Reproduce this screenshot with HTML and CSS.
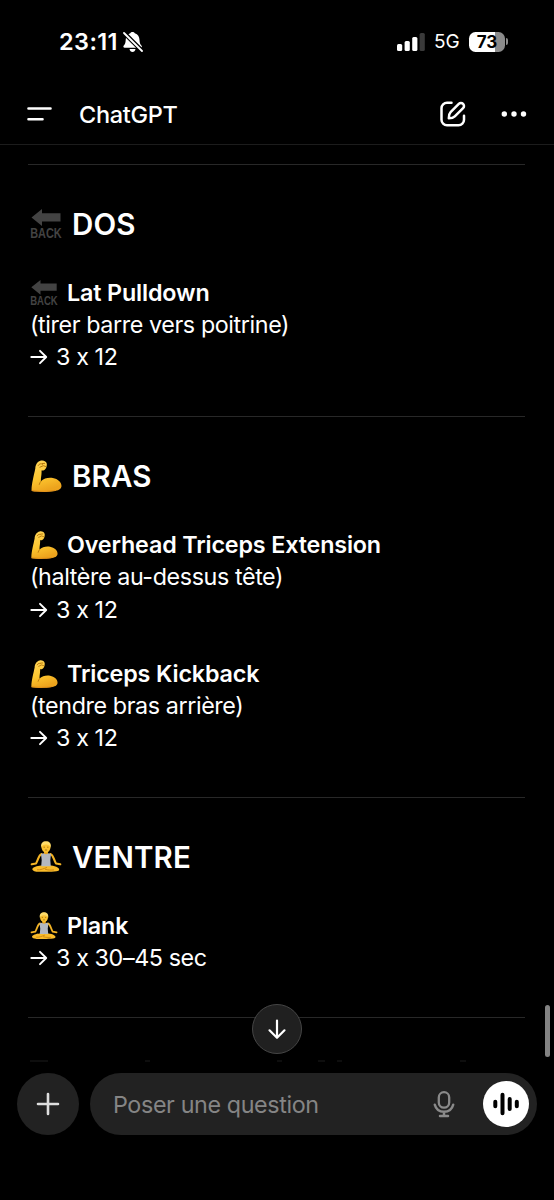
FILE: index.html
```html
<!DOCTYPE html>
<html lang="fr">
<head>
    <meta charset="UTF-8">
    <meta name="viewport" content="width=device-width, initial-scale=1.0">
    <title>ChatGPT</title>
    <link rel="stylesheet" href="styles.css">
</head>
<body>
    <!-- Icônes réutilisées dans la conversation -->
    <svg class="sprites" width="0" height="0">
        <defs>
            <linearGradient id="peau" x1="0" y1="0" x2="0.3" y2="1">
                <stop offset="0" stop-color="#ffd65c"/>
                <stop offset="0.6" stop-color="#fdc62f"/>
                <stop offset="1" stop-color="#eda41d"/>
            </linearGradient>
        </defs>
        <symbol id="bras" viewBox="0 0 32 32">
            <path d="M1.6 31C1.200 25 4 15 5.300 8.500 5.400 4.500 7.600 1.300 11 .5c2.700-.5 5.600.8 5.800 3.300.2 2.500-.7 5.100-2.400 6.200-1 .6-2 .6-2.900.5.400 3.700-.8 7.500-.6 10.700 3-2.700 7.500-3.900 12-3.100 5 .9 8.600 4.300 8.600 7.900-.1 3.200-3.400 4.600-7.800 5.200-6.500.9-15.500 1-22.100-.2z" fill="url(#peau)"/>
            <path d="M8.200 5.500c1-2 3.200-2.300 4.300-1.200M9.900 7.200l3.400-1.500 2.400.8M12.300 3.500l2.300-.1M11 21.200c-.9 1-1.400 2-1.700 3.200" fill="none" stroke="#b7780d" stroke-width="1" stroke-linecap="round"/>
            <path d="M2.500 30.600c7 1.200 17.500.8 22.500-.3" fill="none" stroke="#df8d1a" stroke-width="1" stroke-linecap="round"/>
        </symbol>
        <symbol id="yoga" viewBox="0 0 32 32">
            <path d="M11.600 13C8.500 14 8.500 18.500 6 22.500l-4.300.8M20.400 13c3.100 1 3.100 5.500 5.600 9.500l4.300.8" fill="none" stroke="#f3b324" stroke-width="2.100" stroke-linecap="round" stroke-linejoin="round"/>
            <path d="M14 9h4v5h-4z" fill="#e9a51c"/>
            <path d="M11 24.500c-4 .3-8.200 1.600-8.700 3.600.2 2.700 4.500 2.900 9 2.700 5-.1 13.500.5 17.200-1 2.600-2.300-2.500-4.900-7.500-5.300z" fill="#f9bb29"/>
            <path d="M7 28.800c4 .4 7-1.400 10-2.400M15 28.200c3 1 6 1 9 .7" fill="none" stroke="#c98011" stroke-width="0.9"/>
            <path d="M11 13l2.600-.8c1.500 1.500 3.300 1.500 4.800 0L21 13l-.7 6 .5 6.200h-9.600l.5-6.200z" fill="#b4b8c0"/>
            <ellipse cx="16" cy="6.200" rx="4.500" ry="5.300" fill="#fbc12f"/>
            <path d="M11.200 6.500C10.500 2 13 .3 16 .3s5.500 1.700 4.800 6.200C20 4.700 18.500 3.600 16 3.600s-4 1.100-4.800 2.900z" fill="#ffdc6a"/>
            <path d="M13.500 6.200h1.400M17.100 6.200h1.400M14.900 9h2.200" stroke="#8b5a10" stroke-width="0.7"/>
        </symbol>
        <symbol id="fleche" viewBox="0 0 18 16">
            <path d="M1.300 8H16M10 1.800 16.200 8 10 14.200" fill="none" stroke="#fff" stroke-width="1.900" stroke-linecap="round" stroke-linejoin="round"/>
        </symbol>
    </svg>

    <div class="status-bar">
        <div class="status-left">
            <span class="time">23:11</span>
            <svg width="20" height="22" viewBox="0 0 20 22">
                <path d="M9.500 1c1.300 0 2 .6 2.300 1.300 3.200.8 4.600 3.400 4.700 6.700.1 3.200.8 4.300 2.100 5.800.6.800.2 1.900-.8 1.900H1.600c-1.100 0-1.600-1-1-1.900 1.300-1.500 2-2.600 2.100-5.800.1-3.300 1.400-5.900 4.600-6.700C7.500 1.600 8.200 1 9.500 1z" fill="#fff"/>
                <path d="M6.500 18h6c-.3 1.900-1.500 2.900-3 2.900s-2.700-1-3-2.900z" fill="#fff"/>
                <path d="M1 1.800 19 19.800" stroke="#000" stroke-width="4.400"/>
                <path d="M1 2 19 20" stroke="#fff" stroke-width="1.800" stroke-linecap="round"/>
            </svg>
        </div>
        <div class="status-right">
            <svg width="28" height="18" viewBox="0 0 28 18">
                <rect x="0" y="11" width="5.200" height="7" rx="1.500" fill="#fff"/>
                <rect x="7.600" y="8" width="5.200" height="10" rx="1.500" fill="#fff"/>
                <rect x="15.200" y="4" width="5.200" height="14" rx="1.500" fill="#fff"/>
                <rect x="22.600" y="0" width="5.200" height="18" rx="1.500" fill="#3a3a3a"/>
            </svg>
            <span class="network">5G</span>
            <div class="battery"><span>73</span></div>
            <div class="battery-tip"></div>
        </div>
    </div>

    <header class="header">
        <svg class="menu-icon" width="26" height="16" viewBox="0 0 26 16">
            <path d="M1.500 2.500h22M1.500 13.300h14" stroke="#fff" stroke-width="2.600" stroke-linecap="round"/>
        </svg>
        <span class="title">ChatGPT</span>
        <svg class="edit-icon" width="28" height="28" viewBox="0 0 28 28" fill="none" stroke="#fff" stroke-width="2.500" stroke-linecap="round" stroke-linejoin="round">
            <path d="M12.500 2.800H8a5.500 5.500 0 0 0-5.500 5.500v11.500a5.500 5.500 0 0 0 5.500 5.500h11.500a5.500 5.500 0 0 0 5.500-5.500v-4"/>
            <path d="M9.800 18.300c0-3 .4-4.700 1.800-6.100l8.200-8.300a3 3 0 0 1 4.300 4.300l-8.300 8.200c-1.400 1.400-3 1.900-6 1.900z"/>
        </svg>
        <svg class="dots-icon" width="26" height="6" viewBox="0 0 26 6" fill="#fff">
            <circle cx="3.300" cy="3" r="2.700"/>
            <circle cx="13" cy="3" r="2.700"/>
            <circle cx="22.500" cy="3" r="2.700"/>
        </svg>
    </header>

    <main class="chat">
        <section>
            <h2>
                <svg class="emoji" viewBox="0 0 32 32">
                    <path d="M1.500 9.500 12 1v4.200h18.500v8.300H12V18z" fill="#434343"/>
                    <text x="0.2" y="30" textLength="31.500" lengthAdjust="spacingAndGlyphs" class="back-text">BACK</text>
                </svg>
                <span>DOS</span>
            </h2>
            <p>
                <strong>
                    <svg class="emoji" viewBox="0 0 32 32">
                        <path d="M1.500 9.500 12 1v4.200h18.500v8.300H12V18z" fill="#434343"/>
                        <text x="0.2" y="30" textLength="31.500" lengthAdjust="spacingAndGlyphs" class="back-text">BACK</text>
                    </svg>
                    <span>Lat Pulldown</span>
                </strong>
                <span>(tirer barre vers poitrine)</span>
                <span class="reps"><svg class="arrow"><use href="#fleche"/></svg>3 x 12</span>
            </p>
        </section>
        <section>
            <h2><svg class="emoji"><use href="#bras"/></svg><span>BRAS</span></h2>
            <p>
                <strong><svg class="emoji"><use href="#bras"/></svg><span>Overhead Triceps Extension</span></strong>
                <span>(haltère au-dessus tête)</span>
                <span class="reps"><svg class="arrow"><use href="#fleche"/></svg>3 x 12</span>
            </p>
            <p>
                <strong><svg class="emoji"><use href="#bras"/></svg><span>Triceps Kickback</span></strong>
                <span>(tendre bras arrière)</span>
                <span class="reps"><svg class="arrow"><use href="#fleche"/></svg>3 x 12</span>
            </p>
        </section>
        <section>
            <h2><svg class="emoji"><use href="#yoga"/></svg><span>VENTRE</span></h2>
            <p>
                <strong><svg class="emoji"><use href="#yoga"/></svg><span>Plank</span></strong>
                <span class="reps"><svg class="arrow"><use href="#fleche"/></svg>3 x 30–45 sec</span>
            </p>
        </section>
        <div class="end-line">
            <!-- Haut de la ligne suivante, presque masquée par le fondu -->
            <svg width="497" height="2" viewBox="0 0 497 2">
                <path d="M2 1h18M117 1h5M249 1h5M290 1h7M309 1h5M432 1h6" stroke="#0e0e0e" stroke-width="2"/>
            </svg>
        </div>
    </main>

    <button class="scroll-down">
        <svg width="20" height="22" viewBox="0 0 20 22" fill="none" stroke="#fff" stroke-width="2.200" stroke-linecap="round" stroke-linejoin="round">
            <path d="M10 2.500v17M2.500 12.300 10 19.800l7.500-7.500"/>
        </svg>
    </button>
    <div class="scrollbar"></div>

    <footer class="composer">
        <button class="plus">
            <svg width="24" height="24" viewBox="0 0 24 24">
                <path d="M12 2v20M2 12h20" stroke="#dedede" stroke-width="2.600" stroke-linecap="round"/>
            </svg>
        </button>
        <div class="field">
            <span class="placeholder">Poser une question</span>
            <svg class="mic" width="22" height="28" viewBox="0 0 22 28" fill="none" stroke="#8a8a8a" stroke-width="2.300" stroke-linecap="round">
                <rect x="5.800" y="2.200" width="10.400" height="15.500" rx="5.200"/>
                <path d="M1.800 14.700c1.200 4.600 4.700 7 9.200 7s8-2.400 9.200-7M11 21.700v4M7 26h8" stroke-width="2.500"/>
            </svg>
            <button class="voice">
                <svg width="26" height="24" viewBox="0 0 26 24" stroke="#000" stroke-width="4" stroke-linecap="round">
                    <path d="M2.300 9.800v4.400M9.500 2.800v18.500M16.700 7v10M23.800 9.800v4.400"/>
                </svg>
            </button>
        </div>
    </footer>
</body>
</html>
```
FILE: styles.css
```css
* {
    box-sizing: border-box;
}
body {
    margin: 0;
    width: 554px;
    height: 1200px;
    position: relative;
    overflow: hidden;
    display: flex;
    flex-direction: column;
    background-color: #000;
    color: #fff;
    font-family: Inter, "Liberation Sans", sans-serif;
    font-feature-settings: "calt" 0;
}
svg {
    display: block;
    flex: none;
}
button {
    border: none;
    padding: 0;
    display: flex;
    align-items: center;
    justify-content: center;
    border-radius: 50%;
}
.sprites {
    position: absolute;
}
.back-text {
    font-family: "Liberation Sans", sans-serif;
    font-size: 14px;
    font-weight: bold;
    letter-spacing: 0;
    fill: #434343;
}

/* Barre d'état */
.status-bar {
    height: 84px;
    padding: 0 46px 1px 59px;
    display: flex;
    justify-content: space-between;
    align-items: center;
}
.status-left, .status-right {
    display: flex;
    align-items: center;
}
.time {
    font-size: 23.5px;
    font-weight: 600;
    width: 64px;
    white-space: nowrap;
    letter-spacing: 0.4px;
}
.network {
    font-size: 19px;
    width: 35px;
    margin-left: 9px;
    letter-spacing: -0.1px;
}
.battery {
    width: 36px;
    height: 20px;
    border-radius: 6.5px;
    background: linear-gradient(to right, #fff 73%, #8b8b8b 73%);
    color: #000;
    font-size: 17px;
    font-weight: 700;
    line-height: 20px;
    text-align: center;
}
.battery-tip {
    width: 2px;
    height: 7px;
    margin-left: 1px;
    border-radius: 0 3px 3px 0;
    background-color: #8b8b8b;
}

/* En-tête */
.header {
    height: 61px;
    padding: 0 27px 0 27px;
    display: flex;
    align-items: center;
    border-bottom: 1px solid #1c1c1c;
}
.title {
    margin-left: 26px;
    font-size: 23.5px;
    font-weight: 500;
    letter-spacing: -0.3px;
}
.edit-icon {
    margin-left: auto;
}
.dots-icon {
    margin-left: 34px;
}

/* Conversation */
.chat {
    height: 921px;
    padding: 19px 29px 0 28px;
}
section {
    border-top: 1px solid #282828;
    padding: 39px 0 43px 2px;
}
h2 {
    margin: 0 0 33px;
    height: 40px;
    display: flex;
    align-items: center;
    gap: 10px;
    font-size: 29.5px;
    font-weight: 600;
    letter-spacing: 0.1px;
}
p {
    margin: 32px 0 0;
    font-size: 23.3px;
    line-height: 32.2px;
    letter-spacing: -0.4px;
}
p > span {
    display: block;
    white-space: nowrap;
}
strong {
    display: flex;
    align-items: center;
    gap: 9px;
    height: 32px;
    font-weight: 600;
    white-space: nowrap;
    letter-spacing: -0.15px;
}
.emoji {
    width: 32px;
    height: 32px;
}
strong .emoji {
    width: 28px;
    height: 28px;
}
p > .reps {
    display: flex;
    align-items: center;
}
.arrow {
    width: 18px;
    height: 16px;
    margin-right: 8px;
}
.end-line {
    border-top: 1px solid #282828;
    padding-top: 42px;
}
.scroll-down {
    position: absolute;
    left: 252px;
    top: 1004px;
    width: 50px;
    height: 50px;
    background-color: #202020;
    border: 1px solid #454545;
}
.scrollbar {
    position: absolute;
    right: 4px;
    top: 1005px;
    width: 5px;
    height: 52px;
    border-radius: 3px;
    background-color: #838383;
}

/* Zone de saisie */
.composer {
    padding: 7px 17px 0;
    display: flex;
    gap: 11px;
}
.plus {
    width: 62px;
    height: 62px;
    background-color: #222;
}
.field {
    flex: 1;
    height: 62px;
    padding: 0 8px 0 23px;
    border-radius: 31px;
    background-color: #222;
    display: flex;
    align-items: center;
}
.placeholder {
    font-size: 23.3px;
    letter-spacing: -0.38px;
    color: #858585;
    white-space: nowrap;
}
.mic {
    margin-left: auto;
}
.voice {
    width: 46px;
    height: 46px;
    margin-left: 28px;
    background-color: #fff;
}
```
